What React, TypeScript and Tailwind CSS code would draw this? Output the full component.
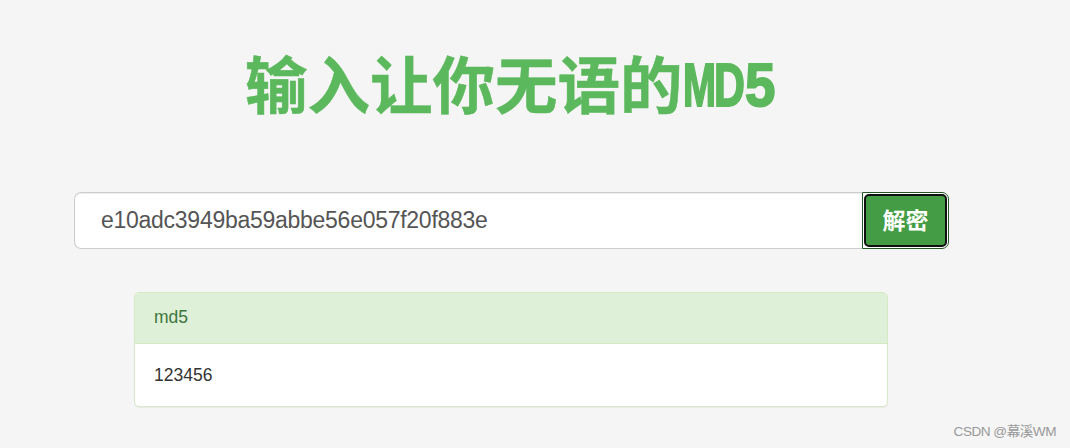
import { useState } from "react";

export default function App() {
  const [hash, setHash] = useState("e10adc3949ba59abbe56e057f20f883e");

  return (
    <main className="relative h-[448px] w-[1070px] overflow-hidden bg-[#f5f5f5] pt-[44px] font-['Liberation_Sans','Noto_Sans_CJK_SC',sans-serif]">
      <h1 className="ml-[245px] flex h-[76px] items-center whitespace-nowrap font-['Noto_Sans_CJK_SC',sans-serif] text-[62.5px] leading-[76px] font-bold text-[#5cb85c]">
        <span className="w-[438px] [-webkit-text-stroke:0.5px_#5cb85c]">输入让你无语的</span>
        <span className="flex pt-[6px] font-['Liberation_Sans',sans-serif] text-[62px] [-webkit-text-stroke:2px_#5cb85c]">
          <span className="w-[31px] origin-left scale-x-[0.64]">M</span>
          <span className="w-[31px] origin-left scale-x-[0.69]">D</span>
          <span className="w-[31px] origin-left scale-x-[0.88]">5</span>
        </span>
      </h1>

      <div className="mt-[72px] ml-[74px] flex h-[57px] w-[875px]">
        <input
          value={hash}
          onChange={(e) => setHash(e.target.value)}
          className="h-[57px] min-w-0 flex-1 rounded-l-[7px] border border-r-0 border-[#ccc] bg-white px-[26px] text-[23px] tracking-[-0.27px] text-[#555] shadow-[inset_0_1px_1px_rgba(0,0,0,0.075)] outline-none"
        />
        <button className="h-[57px] w-[87px] rounded-r-[7px] border border-[#255625] bg-white p-px">
          <span className="flex h-full w-full items-center justify-center rounded-[5px] border-2 border-[#101010] bg-[#449d44] pt-[1px] text-[23px] leading-none font-bold text-white">
            解密
          </span>
        </button>
      </div>

      <section className="mt-[43px] ml-[134px] h-[115px] w-[754px] overflow-hidden rounded-[5px] border border-[#d6e9c6] bg-white shadow-[0_1px_1px_rgba(0,0,0,0.05)]">
        <h2 className="h-[51px] border-b border-[#d6e9c6] bg-[#dff0d8] pl-[19px] text-[17.5px] leading-[49px] text-[#3c763d]">
          md5
        </h2>
        <p className="pl-[19px] text-[17.5px] leading-[62px] text-[#333]">123456</p>
      </section>

      <small className="absolute right-[14px] bottom-[6px] text-[13.6px] leading-[20px] tracking-[-0.5px] whitespace-nowrap text-[#999]">
        CSDN @幕溪WM
      </small>
    </main>
  );
}
